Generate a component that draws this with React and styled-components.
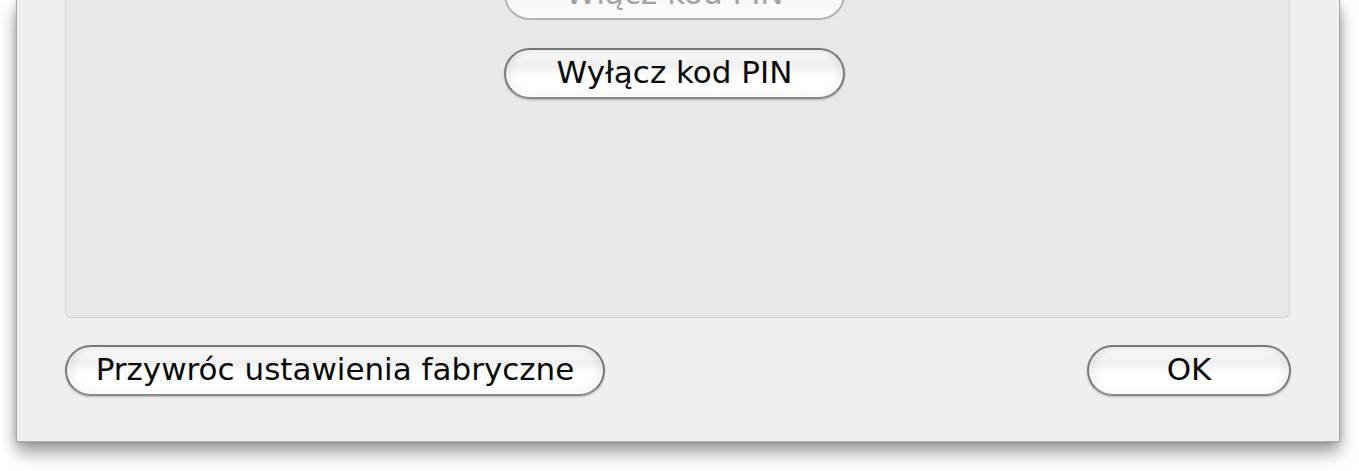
import { createGlobalStyle, styled } from "styled-components";

const GlobalStyle = createGlobalStyle`
  html, body {
    margin: 0;
    padding: 0;
    background: #ffffff;
    overflow: hidden;
  }
`;

export default function App() {
  return (
    <>
      <GlobalStyle />
      <Page>
        <Window>
          <Panel>
            <PinButton disabled>Włącz kod PIN</PinButton>
            <PinButton>Wyłącz kod PIN</PinButton>
          </Panel>
          <Footer>
            <AquaButton $width={540}>Przywróc ustawienia fabryczne</AquaButton>
            <AquaButton $width={204}>OK</AquaButton>
          </Footer>
        </Window>
      </Page>
    </>
  );
}

const Page = styled.div`
  width: 1359px;
  height: 471px;
  padding-left: 16px;
  box-sizing: border-box;
`;

const Window = styled.div`
  width: 1324px;
  height: 442px;
  box-sizing: border-box;
  background: #efefef;
  border: 1px solid #a9a9a9;
  border-top: none;
  box-shadow: 0 10px 16px rgba(0, 0, 0, 0.4), 0 0 6px rgba(0, 0, 0, 0.16);
  display: flex;
  flex-direction: column;
  padding: 0 49px 0 48px;
`;

const Panel = styled.div`
  height: 318px;
  box-sizing: border-box;
  background: #e8e8e8;
  border: 1px solid #d2d2d2;
  border-top: none;
  border-radius: 0 0 6px 6px;
  overflow: hidden;
  display: flex;
  flex-direction: column;
  align-items: center;
  gap: 28px;
  padding-right: 6px;
`;

const AquaButton = styled.button`
  width: ${(p) => p.$width}px;
  height: 51px;
  box-sizing: border-box;
  border-radius: 26px;
  border: 2px solid #787878;
  border-bottom-color: #8a8a8a;
  background: linear-gradient(
    to bottom,
    #fdfdfd 0%,
    #efefef 32%,
    #ffffff 58%,
    #ffffff 100%
  );
  box-shadow: inset 0 -3px 5px rgba(255, 255, 255, 0.9),
    inset 4px 0 8px rgba(0, 0, 0, 0.08), inset -4px 0 8px rgba(0, 0, 0, 0.08),
    0 1px 2px rgba(0, 0, 0, 0.25);
  font-family: "DejaVu Sans", "Liberation Sans", sans-serif;
  font-size: 31px;
  color: #0a0a0a;
  display: flex;
  align-items: center;
  justify-content: center;
  padding: 0 0 3px;
  cursor: default;
  white-space: nowrap;

  &:disabled {
    color: #a2a2a2;
    border-color: #b4b4b4;
    box-shadow: none;
    background: linear-gradient(to bottom, #f6f6f6 0%, #fbfbfb 100%);
  }
`;

const PinButton = styled(AquaButton)`
  width: 341px;
  flex: none;

  &:first-child {
    margin-top: -31px;
  }
`;

const Footer = styled.div`
  display: flex;
  justify-content: space-between;
  padding-top: 27px;
  margin-right: -1px;
`;
